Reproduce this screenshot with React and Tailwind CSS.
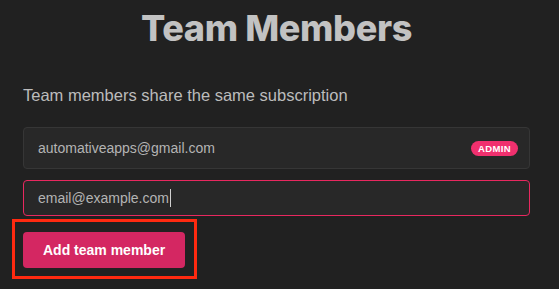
import React from "react";

// Team members settings panel
function MemberRow({ email }) {
  return (
    <div className="flex h-[42px] items-center justify-between rounded-[4px] border border-[#363636] bg-[#282828] pl-[14px] pr-[11px]">
      <span className="text-[14px] text-[#b4b4b4]">{email}</span>
      <span className="rounded-full bg-[#f0306e] px-[7px] py-[1px] text-[9.5px] font-bold leading-[13px] tracking-[0.04em] text-white">
        ADMIN
      </span>
    </div>
  );
}

export default function App() {
  return (
    <div className="min-h-[289px] w-[559px] bg-[#212121] pl-[23px] pr-[29px] pt-[6px] font-['Liberation_Sans',Arial,sans-serif]">
      <h1 className="text-center font-['Inter',sans-serif] text-[36px] font-extrabold leading-[44px] tracking-[-0.01em] text-[#c2c2c2]">
        Team Members
      </h1>

      <p className="mt-[35px] text-[16.5px] leading-[20px] text-[#bcbcbc]">
        Team members share the same subscription
      </p>

      <div className="mt-[22px] flex flex-col gap-[11px]">
        <MemberRow email="automativeapps@gmail.com" />
        <div className="flex h-[36px] items-center rounded-[4px] border border-[#e8285f] bg-[#282828] pl-[14px]">
          <span className="text-[14px] text-[#b4b4b4]">email@example.com</span>
          <span className="ml-[1px] h-[18px] w-px bg-[#d0d0d0]" />
        </div>
      </div>

      <div className="relative mt-[16px] w-fit">
        <button className="h-[36px] rounded-[4px] bg-[#d42762] px-[20px] text-[14px] font-bold text-white">
          Add team member
        </button>
        {/* highlight annotation */}
        <div className="pointer-events-none absolute -bottom-[11px] -left-[11px] -right-[12px] -top-[13px] border-[3px] border-[#ff2a10]" />
      </div>
    </div>
  );
}
